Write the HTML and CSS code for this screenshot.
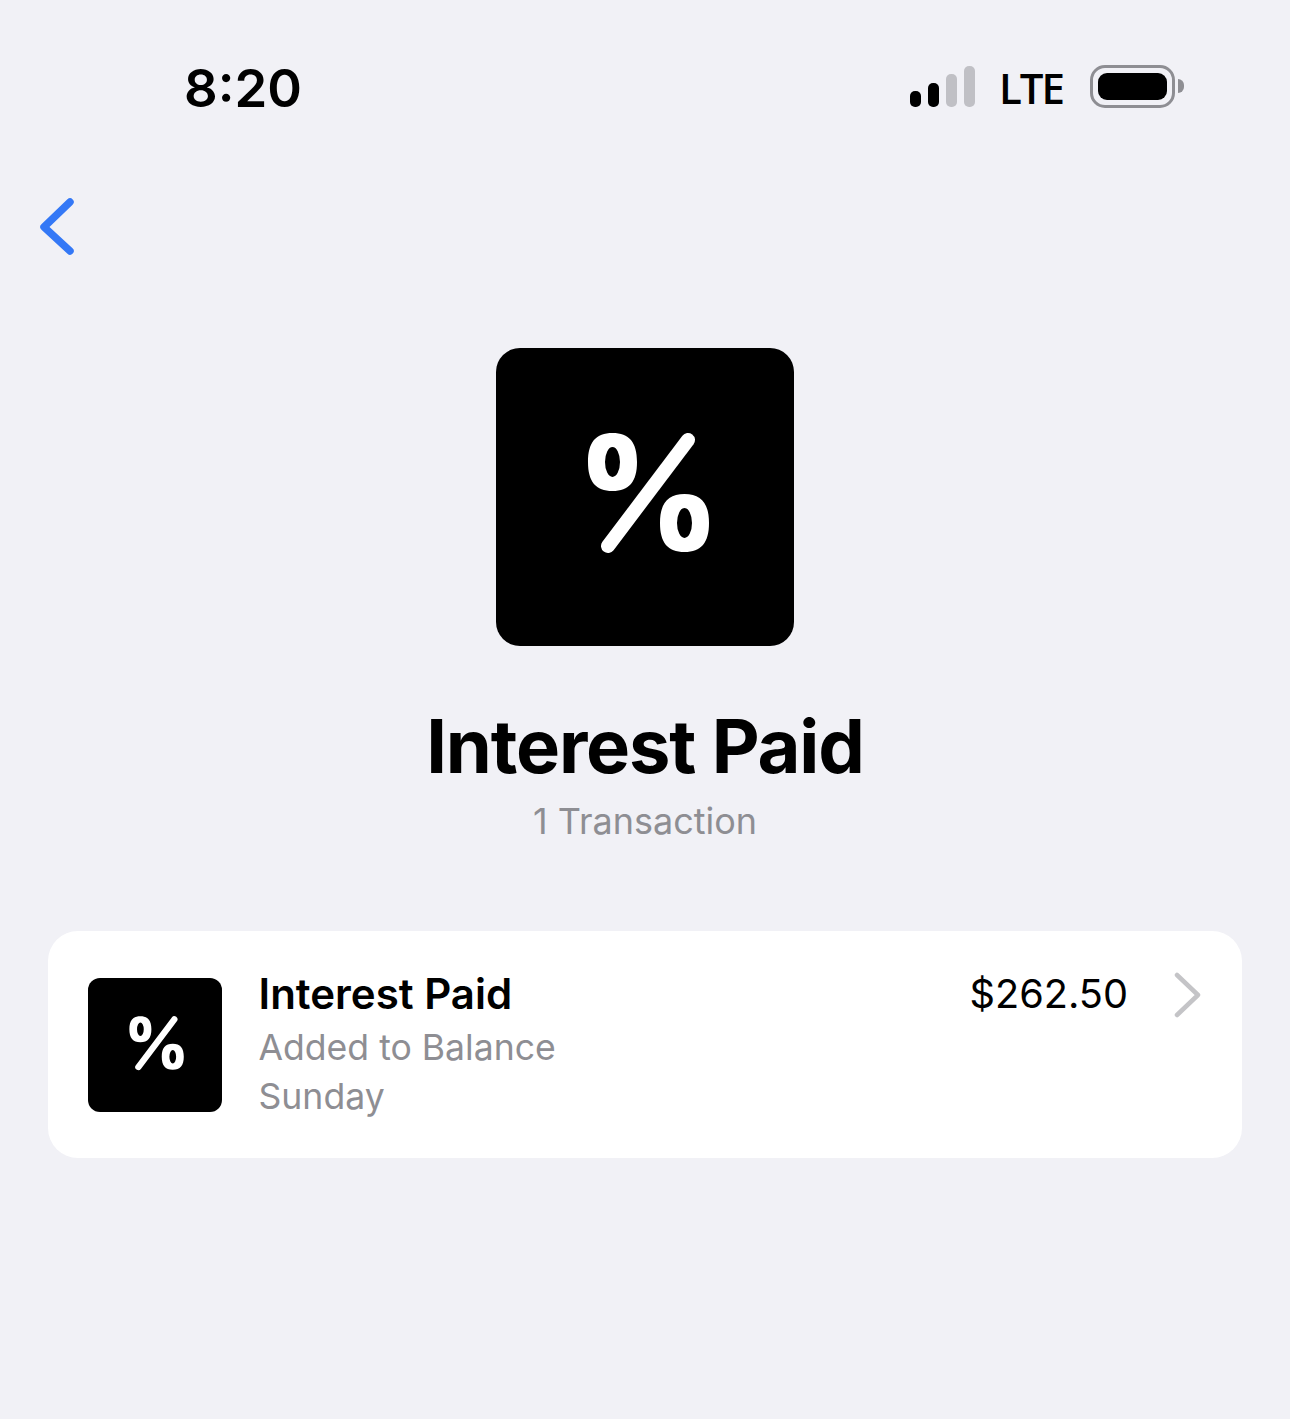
FILE: index.html
```html
<!DOCTYPE html>
<html lang="en">
<head>
<meta charset="utf-8">
<title>Interest Paid</title>
<link rel="stylesheet" href="styles.css">
</head>
<body>
<svg class="defs" width="0" height="0" aria-hidden="true">
  <symbol id="percent" viewBox="0 0 298 298">
    <path fill="#fff" fill-rule="evenodd" d="M92 114c0-19.700 7.800-29 24.500-29c16.700 0 24.500 9.300 24.500 29c0 19.700-7.800 29-24.500 29c-16.700 0-24.500-9.300-24.500-29ZM109 114a7.500 15 0 1 1 15 0a7.500 15 0 1 1-15 0Z"/>
    <path fill="#fff" fill-rule="evenodd" d="M164 175c0-19.700 7.800-29 24.500-29c16.700 0 24.500 9.300 24.500 29c0 19.700-7.800 29-24.500 29c-16.700 0-24.500-9.300-24.500-29ZM181 175a7.500 15 0 1 1 15 0a7.500 15 0 1 1-15 0Z"/>
    <path stroke="#fff" stroke-width="14" stroke-linecap="round" fill="none" d="M192 92L112 198"/>
  </symbol>
</svg>
<main class="screen">
  <header class="status">
    <div class="time">8:20</div>
    <div class="indicators">
      <div class="signal">
        <span class="bar bar-1"></span>
        <span class="bar bar-2"></span>
        <span class="bar bar-3"></span>
        <span class="bar bar-4"></span>
      </div>
      <div class="network">LTE</div>
      <div class="battery">
        <div class="battery-shell"><div class="battery-fill"></div></div>
        <div class="battery-cap"></div>
      </div>
    </div>
  </header>

  <nav class="nav">
    <svg class="back" width="36" height="60" viewBox="0 0 36 60"><path d="M31 5L5 30L31 54" fill="none" stroke="#3478f6" stroke-width="7.500" stroke-linecap="round" stroke-linejoin="round"/></svg>
  </nav>

  <section class="hero">
    <div class="tile tile-large"><svg class="glyph"><use href="#percent"/></svg></div>
    <h1 class="title">Interest Paid</h1>
    <p class="subtitle">1 Transaction</p>
  </section>

  <section class="card">
    <div class="tile tile-small"><svg class="glyph"><use href="#percent"/></svg></div>
    <div class="details">
      <div class="name">Interest Paid</div>
      <div class="meta meta-first">Added to Balance</div>
      <div class="meta">Sunday</div>
    </div>
    <div class="amount">$262.50</div>
    <svg class="chevron" width="28" height="46" viewBox="0 0 28 46"><path d="M3 3L24 23L3 43" fill="none" stroke="#c4c4c7" stroke-width="4.500" stroke-linecap="round" stroke-linejoin="round"/></svg>
  </section>
</main>
</body>
</html>
```
FILE: styles.css
```css
* { box-sizing: border-box; }
html, body { margin: 0; padding: 0; }
body {
  width: 1290px;
  height: 1419px;
  overflow: hidden;
  background: #f1f1f6;
  color: #000;
  font-family: Inter, "Liberation Sans", sans-serif;
}
.defs { display: block; height: 0; }
.screen { display: flex; flex-direction: column; height: 1419px; }

.status {
  display: flex;
  justify-content: space-between;
  align-items: center;
  height: 64px;
  margin-top: 56px;
  padding: 0 106px 0 184px;
}
.time { font-size: 52.600px; font-weight: 600; line-height: 64px; letter-spacing: 0; }
.indicators { display: flex; align-items: center; }
.signal { display: flex; align-items: flex-end; gap: 7px; height: 42px; margin-bottom: 4px; }
.bar { display: block; width: 11px; border-radius: 5px; background: #000; }
.bar-1 { height: 16px; }
.bar-2 { height: 24px; }
.bar-3 { height: 33px; background: #c0c0c5; }
.bar-4 { height: 41px; background: #c0c0c5; }
.network { margin-left: 24px; font-family: "Open Sans", sans-serif; font-size: 42px; font-weight: 600; line-height: 50px; letter-spacing: -2px; }
.battery { display: flex; align-items: center; margin-left: 27px; margin-bottom: 4px; }
.battery-shell { width: 85px; height: 43px; padding: 5px; border: 3px solid #8e8e93; border-radius: 15px; }
.battery-fill { width: 100%; height: 100%; background: #000; border-radius: 9px; }
.battery-cap { width: 6px; height: 14px; margin-left: 3px; background: #8e8e93; border-radius: 0 7px 7px 0; }

.nav { display: flex; height: 60px; margin-top: 77px; padding-left: 38.500px; }
.back { display: block; }

.hero { display: flex; flex-direction: column; align-items: center; margin-top: 91px; }
.tile { background: #000; display: flex; flex: none; }
.tile-large { width: 298px; height: 298px; border-radius: 24px; }
.tile-small { width: 134px; height: 134px; border-radius: 12px; }
.glyph { width: 100%; height: 100%; display: block; }
.title { margin: 54px 0 0; font-size: 74px; font-weight: 700; line-height: 92px; letter-spacing: -1.150px; }
.subtitle { margin: 7px 0 0; font-size: 36px; line-height: 44px; color: #8e8e93; font-weight: 400; }

.card {
  display: flex;
  align-items: flex-start;
  height: 227px;
  margin: 88px 48px 0;
  padding: 47px 40px 0 40px;
  background: #fff;
  border-radius: 30px;
}
.details { flex: 1; margin-left: 36.500px; margin-top: -8px; }
.name { font-size: 42px; font-weight: 600; line-height: 48px; }
.meta { font-size: 35.600px; line-height: 49px; color: #8e8e93; }
.meta-first { margin-top: 5px; }
.amount { font-size: 39.700px; line-height: 48px; margin-top: -8px; }
.chevron { display: block; margin-left: 46px; margin-top: -6px; }
```
